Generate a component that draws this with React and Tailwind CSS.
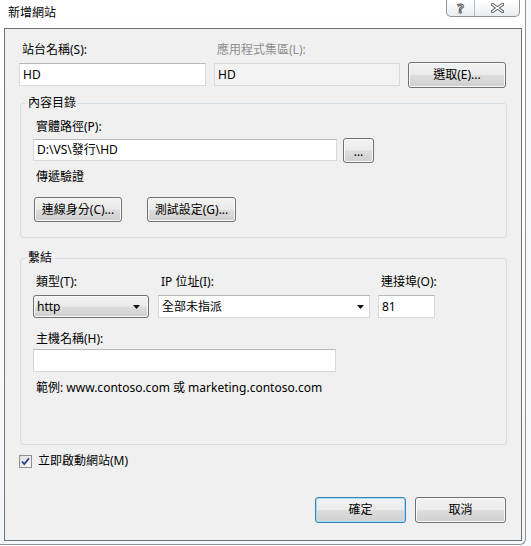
import React from 'react';

const face =
  'rounded-[3px] border border-[#707070] bg-[linear-gradient(to_bottom,#f2f2f2_0%,#ebebeb_48%,#dddddd_52%,#cfcfcf_100%)] shadow-[inset_0_0_0_1px_#fbfbfb] text-black';
const btn = `flex items-center justify-center ${face}`;

const box = 'border border-[#d6d9dd] border-t-[#b5b9bf] bg-white';

function Arrow() {
  return (
    <svg width="7" height="4" viewBox="0 0 7 4" className="shrink-0">
      <path d="M0 0h7L3.5 4z" fill="#111" />
    </svg>
  );
}

function Label({ children, className = '' }) {
  return <div className={`h-[16px] leading-[16px] pl-[3px] whitespace-nowrap ${className}`}>{children}</div>;
}

export default function App() {
  return (
    <div className="w-[531px] h-[546px] bg-[#f6f8fa] text-[12px] text-black font-['Noto_Sans','Noto_Sans_CJK_TC',sans-serif] overflow-hidden">
      <div className="w-[526px] h-[545px] flex flex-col border-r border-b border-[#8e9297] rounded-br-[6px] bg-[linear-gradient(to_bottom,#ffffff,#f3f6f9)]">
        {/* title bar */}
        <div className="h-[28px] flex items-start">
          <div className="pl-[8px] pt-[5px] leading-[16px]">新增網站</div>
          <div className="ml-auto mr-[5px] flex h-[17px] border border-t-0 border-[#8f949a] rounded-b-[5px] bg-[linear-gradient(to_bottom,#ffffff,#e9ecef)] overflow-hidden">
            <div className="w-[28px] flex items-center justify-center border-r border-[#b8bcc1]">
              <span className="text-[13px] font-bold leading-none text-white [-webkit-text-stroke:1px_#555]">?</span>
            </div>
            <div className="w-[44px] flex items-center justify-center">
              <svg width="13" height="10" viewBox="0 0 13 10">
                <path d="M1.5 1.5l10 7M11.5 1.5l-10 7" stroke="#5a5a5a" strokeWidth="3.2" strokeLinecap="square" />
                <path d="M1.5 1.5l10 7M11.5 1.5l-10 7" stroke="#ffffff" strokeWidth="1.4" strokeLinecap="square" />
              </svg>
            </div>
          </div>
        </div>

        {/* client area */}
        <div className="ml-[4px] w-[518px] h-[513px] border border-[#6f7277] bg-[#f0f0f0] flex flex-col pl-[14px] pt-[13px]">
          {/* row 1 */}
          <div className="flex items-start">
            <div className="w-[187px] flex flex-col">
              <Label className="mb-[5px]">站台名稱(S):</Label>
              <div className={`${box} h-[23px] pl-[3px] leading-[21px]`}>HD</div>
            </div>
            <div className="ml-[8px] w-[186px] flex flex-col">
              <Label className="mb-[5px] text-[#8f8f8f] pl-[3px]">應用程式集區(L):</Label>
              <div className="h-[23px] pl-[3px] leading-[21px] border border-[#d9d9d9] bg-[#f3f3f3]">HD</div>
            </div>
            <button className={`${btn} ml-[8px] mt-[20px] w-[98px] h-[26px]`}>選取(E)...</button>
          </div>

          {/* 內容目錄 */}
          <fieldset className="mt-[7px] ml-[1px] w-[487px] border border-[#d5dfe5] rounded-[3px] p-0">
            <legend className="ml-[5px] px-[2px] h-[16px] leading-[16px]">內容目錄</legend>
            <div className="pl-[12px] pt-[8px] pb-[15px] flex flex-col">
              <Label className="mb-[3px]">實體路徑(P):</Label>
              <div className="flex items-start">
                <div className={`${box} mt-[1px] w-[304px] h-[22px] pl-[3px] leading-[20px]`}>D:\VS\發行\HD</div>
                <button className={`${btn} ml-[6px] w-[31px] h-[25px] leading-none pt-[3px]`}>...</button>
              </div>
              <Label className="mt-[6px]">傳遞驗證</Label>
              <div className="mt-[12px] flex">
                <button className={`${btn} ml-[1px] w-[88px] h-[25px]`}>連線身分(C)...</button>
                <button className={`${btn} ml-[25px] w-[89px] h-[25px]`}>測試設定(G)...</button>
              </div>
            </div>
          </fieldset>

          {/* 繫結 */}
          <fieldset className="mt-[12px] ml-[1px] w-[487px] border border-[#d5dfe5] rounded-[3px] p-0">
            <legend className="ml-[5px] px-[2px] h-[16px] leading-[16px]">繫結</legend>
            <div className="pl-[12px] pt-[8px] pb-[48px] flex flex-col">
              <div className="flex items-start">
                <div className="w-[116px] flex flex-col">
                  <Label className="mb-[5px]">類型(T):</Label>
                  <div className={`${face} h-[23px] flex items-center justify-between pl-[3px] pr-[8px]`}>
                    <span>http</span>
                    <Arrow />
                  </div>
                </div>
                <div className="ml-[9px] w-[212px] flex flex-col">
                  <Label className="mb-[5px] pl-0">IP 位址(I):</Label>
                  <div className={`${box} h-[23px] flex items-center justify-between pl-[3px] pr-[5px]`}>
                    <span>全部未指派</span>
                    <Arrow />
                  </div>
                </div>
                <div className="ml-[8px] w-[57px] flex flex-col">
                  <Label className="mb-[5px] pl-0">連接埠(O):</Label>
                  <div className={`${box} h-[23px] pl-[3px] leading-[21px]`}>81</div>
                </div>
              </div>
              <Label className="mt-[13px] mb-[2px]">主機名稱(H):</Label>
              <div className={`${box} w-[303px] h-[23px]`} />
              <Label className="mt-[8px]">範例: www.contoso.com 或 marketing.contoso.com</Label>
            </div>
          </fieldset>

          {/* checkbox */}
          <div className="mt-[8px] flex items-center h-[16px]">
            <div className="w-[13px] h-[13px] border border-[#8f8f8f] bg-[linear-gradient(135deg,#dedede,#fbfbfb)] flex items-center justify-center">
              <svg width="9" height="9" viewBox="0 0 9 9">
                <path d="M1 4.5l2.3 2.5L8 1.2" fill="none" stroke="#2a3f8f" strokeWidth="1.8" />
              </svg>
            </div>
            <span className="ml-[6px] leading-[16px]">立即啟動網站(M)</span>
          </div>

          {/* buttons */}
          <div className="mt-[28px] flex ml-[296px]">
            <button className="flex items-center justify-center w-[91px] h-[26px] rounded-[3px] border border-[#3c7fb1] bg-[linear-gradient(to_bottom,#f2f2f2_0%,#ebebeb_48%,#dddddd_52%,#cfcfcf_100%)] shadow-[inset_0_0_0_1px_#9ee0fb]">
              確定
            </button>
            <button className={`${btn} ml-[9px] w-[91px] h-[26px]`}>取消</button>
          </div>
        </div>
      </div>
    </div>
  );
}
